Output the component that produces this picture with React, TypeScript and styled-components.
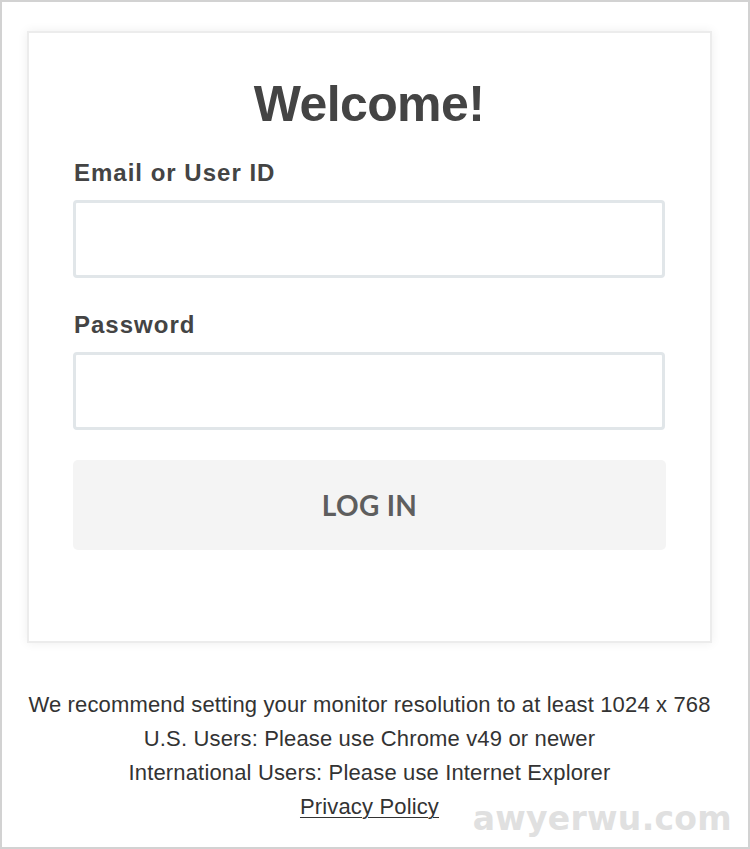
import React from "react";
import styled, { createGlobalStyle } from "styled-components";

const GlobalStyle = createGlobalStyle`
  html, body {
    margin: 0;
    padding: 0;
    background: #ffffff;
  }
  * { box-sizing: border-box; }
`;

const Frame = styled.div`
  position: relative;
  width: 750px;
  height: 849px;
  border: 2px solid #d2d2d2;
  background: #ffffff;
  padding: 29px 36px 0 25px;
  display: flex;
  flex-direction: column;
  align-items: stretch;
  overflow: hidden;
`;

const Card = styled.form`
  width: 685px;
  height: 612px;
  border: 2px solid #ececec;
  box-shadow: 0 0 10px rgba(0, 0, 0, 0.07);
  background: #ffffff;
  padding: 41px 45px 0 44px;
  display: flex;
  flex-direction: column;
`;

const Title = styled.h1`
  margin: 0 0 24px;
  font-family: "Liberation Sans", Arial, sans-serif;
  font-weight: 700;
  font-size: 50px;
  line-height: 60px;
  letter-spacing: -0.6px;
  color: #444444;
  text-align: center;
`;

const Field = styled.div<{ $gapAfter: number }>`
  display: flex;
  flex-direction: column;
  gap: 12px;
  margin-bottom: ${(p) => p.$gapAfter}px;
`;

const Label = styled.label`
  padding-left: 1px;
  font-family: "Liberation Sans", Arial, sans-serif;
  font-weight: 700;
  font-size: 24px;
  line-height: 30px;
  letter-spacing: 1px;
  color: #444444;
`;

const Input = styled.input`
  width: 592px;
  height: 78px;
  border: 3px solid #e1e6e9;
  border-radius: 4px;
  background: #ffffff;
  padding: 0 14px;
  font-family: "Liberation Sans", Arial, sans-serif;
  font-size: 22px;
  outline: none;
`;

const Button = styled.button`
  width: 593px;
  height: 90px;
  border: none;
  border-radius: 5px;
  background: #f4f4f4;
  color: #5e5e5e;
  font-family: Lato, "Open Sans", sans-serif;
  font-weight: 700;
  font-size: 28px;
  letter-spacing: 0.3px;
  cursor: pointer;
  padding: 0;
`;

const Footer = styled.div`
  margin-top: 45px;
  width: 685px;
  display: flex;
  flex-direction: column;
  align-items: center;
  font-family: "Liberation Sans", Arial, sans-serif;
  font-size: 22px;
  line-height: 34px;
  letter-spacing: 0.15px;
  color: #333333;
`;

const FooterLine = styled.div`
  white-space: nowrap;
`;

const PolicyLink = styled.a`
  color: #333333;
  text-decoration: underline;
  text-decoration-thickness: 1px;
  text-underline-offset: 3px;
`;

const Watermark = styled.div`
  position: absolute;
  right: 16px;
  bottom: 8px;
  font-family: "DejaVu Sans", sans-serif;
  font-weight: 700;
  font-size: 33px;
  line-height: 40px;
  letter-spacing: 0.3px;
  color: #e0e0e0;
  pointer-events: none;
`;

export default function App() {
  return (
    <>
      <GlobalStyle />
      <Frame>
        <Card onSubmit={(e) => e.preventDefault()}>
          <Title>Welcome!</Title>
          <Field $gapAfter={32}>
            <Label htmlFor="email">Email or User ID</Label>
            <Input id="email" type="text" />
          </Field>
          <Field $gapAfter={30}>
            <Label htmlFor="password">Password</Label>
            <Input id="password" type="password" />
          </Field>
          <Button type="submit">LOG IN</Button>
        </Card>
        <Footer>
          <FooterLine>We recommend setting your monitor resolution to at least 1024 x 768</FooterLine>
          <FooterLine>U.S. Users: Please use Chrome v49 or newer</FooterLine>
          <FooterLine>International Users: Please use Internet Explorer</FooterLine>
          <FooterLine>
            <PolicyLink href="#">Privacy Policy</PolicyLink>
          </FooterLine>
        </Footer>
        <Watermark>awyerwu.com</Watermark>
      </Frame>
    </>
  );
}
